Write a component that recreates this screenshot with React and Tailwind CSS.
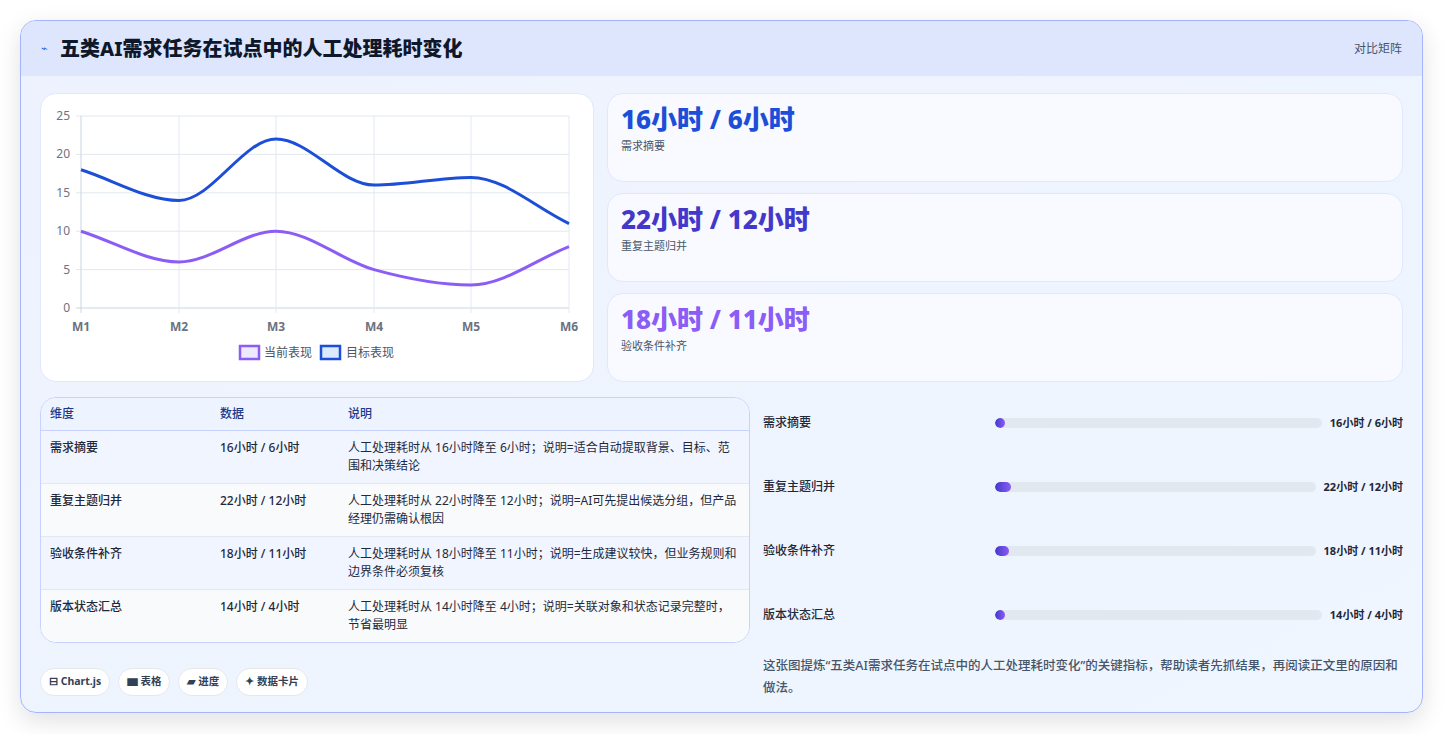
import React from "react";

const X = [80, 178, 275, 373, 470, 568];
const Y0 = 307, U = 7.68;
const blue = [18, 14, 22, 16, 17, 11];
const purple = [10, 6, 10, 5, 3, 8];

function path(vals) {
  const p = vals.map((v, i) => [X[i], Y0 - v * U]);
  let d = `M${p[0][0]},${p[0][1]}`;
  for (let i = 0; i < p.length - 1; i++) {
    const p0 = p[i - 1] || p[i], p1 = p[i], p2 = p[i + 1], p3 = p[i + 2] || p2;
    let s1 = (p2[1] - p0[1]) / (p2[0] - p0[0]);
    let s2 = (p3[1] - p1[1]) / (p3[0] - p1[0]);
    if (p0 !== p1 && (p1[1] - p0[1]) * (p2[1] - p1[1]) <= 0) s1 = 0;
    if (p3 !== p2 && (p2[1] - p1[1]) * (p3[1] - p2[1]) <= 0) s2 = 0;
    if (p0 === p1) s1 = (p2[1] - p1[1]) / (p2[0] - p1[0]);
    if (p3 === p2) s2 = (p2[1] - p1[1]) / (p2[0] - p1[0]);
    const dx = (p2[0] - p1[0]) / 3;
    d += ` C${p1[0] + dx},${p1[1] + s1 * dx} ${p2[0] - dx},${p2[1] - s2 * dx} ${p2[0]},${p2[1]}`;
  }
  return d;
}

const font = { fontFamily: '"Noto Sans", "Noto Sans CJK SC", sans-serif' };

const stats = [
  ["16小时 / 6小时", "需求摘要", "text-[#1d4ed8]"],
  ["22小时 / 12小时", "重复主题归并", "text-[#4338ca]"],
  ["18小时 / 11小时", "验收条件补齐", "text-[#8b5cf6]"],
];

const rows = [
  ["需求摘要", "16小时 / 6小时", "人工处理耗时从 16小时降至 6小时；说明=适合自动提取背景、目标、范围和决策结论"],
  ["重复主题归并", "22小时 / 12小时", "人工处理耗时从 22小时降至 12小时；说明=AI可先提出候选分组，但产品经理仍需确认根因"],
  ["验收条件补齐", "18小时 / 11小时", "人工处理耗时从 18小时降至 11小时；说明=生成建议较快，但业务规则和边界条件必须复核"],
  ["版本状态汇总", "14小时 / 4小时", "人工处理耗时从 14小时降至 4小时；说明=关联对象和状态记录完整时，节省最明显"],
];

const bars = [
  ["需求摘要", "16小时 / 6小时", 10],
  ["重复主题归并", "22小时 / 12小时", 16],
  ["验收条件补齐", "18小时 / 11小时", 14],
  ["版本状态汇总", "14小时 / 4小时", 10],
];

export default function App() {
  return (
    <div className="w-[1444px] h-[734px] bg-white p-[20px] pb-0" style={font}>
      <div className="w-[1403px] h-[693px] rounded-2xl border border-[#a5b4fc] bg-gradient-to-br from-[#eef2fe] to-[#eff6ff] shadow-[0_8px_24px_rgba(0,0,0,0.12)] overflow-hidden flex flex-col">
        <div className="h-[55px] shrink-0 bg-[#dde6fd] flex items-center justify-between px-5">
          <div className="flex items-center gap-3">
            <span className="text-[#2563eb] text-[11px]">⌁</span>
            <span className="text-[20px] font-extrabold text-[#0f172a]">五类AI需求任务在试点中的人工处理耗时变化</span>
          </div>
          <span className="text-[12px] text-[#475569]">对比矩阵</span>
        </div>
        <div className="flex-1 px-[19px] pt-[17px] flex flex-col">
          <div className="flex gap-[13px] h-[289px]">
            <div className="w-[554px] rounded-2xl bg-white border border-[#e0e7ff] relative">
              <svg width="554" height="289" viewBox="40 93 554 289" className="absolute inset-0">
                {[0, 5, 10, 15, 20, 25].map((v) => (
                  <g key={v}>
                    <line x1="75" x2="568" y1={Y0 - v * U} y2={Y0 - v * U} stroke={v === 0 ? "#cbd5e1" : "#e2e8f0"} />
                    <text x="69" y={Y0 - v * U + 4} textAnchor="end" fontSize="12" fill="#6b7280">{v}</text>
                  </g>
                ))}
                {X.map((x, i) => (
                  <g key={x}>
                    <line x1={x} x2={x} y1="115" y2="312" stroke={i === 0 ? "#cbd5e1" : "#e2e8f0"} />
                    <text x={x} y="330" textAnchor="middle" fontSize="12" fontWeight="bold" fill="#6b7280">M{i + 1}</text>
                  </g>
                ))}
                <path d={path(purple)} fill="none" stroke="#8b5cf6" strokeWidth="3" />
                <path d={path(blue)} fill="none" stroke="#1d4ed8" strokeWidth="3" />
                <rect x="239" y="345" width="19" height="13" fill="#ede9fe" stroke="#8b5cf6" strokeWidth="2.5" />
                <text x="263" y="356" fontSize="12" fill="#4b5563">当前表现</text>
                <rect x="320" y="345" width="19" height="13" fill="#dbeafe" stroke="#1d4ed8" strokeWidth="2.5" />
                <text x="345" y="356" fontSize="12" fill="#4b5563">目标表现</text>
              </svg>
            </div>
            <div className="flex-1 flex flex-col gap-[11px]">
              {stats.map(([v, l, c]) => (
                <div key={l} className="h-[89px] rounded-2xl bg-[#f8faff] border border-[#e0e7ff] px-[13px] pt-[7px]">
                  <div className={`text-[26px] font-extrabold leading-[36px] ${c}`}>{v}</div>
                  <div className="text-[11px] text-[#475569] mt-[1px]">{l}</div>
                </div>
              ))}
            </div>
          </div>
          <div className="flex gap-[13px] mt-[15px]">
            <div className="w-[710px] shrink-0 flex flex-col">
              <div className="rounded-2xl border border-[#c7d2fe] overflow-hidden bg-white">
                <div className="flex h-[33px] items-center bg-[#eef4ff] border-b border-[#c7d2fe] text-[12px] font-medium text-[#1e3a8a]">
                  <div className="w-[179px] pl-[9px]">维度</div>
                  <div className="w-[128px]">数据</div>
                  <div className="flex-1">说明</div>
                </div>
                {rows.map((r, i) => (
                  <div key={r[0]} className={`flex py-[8px] text-[12px] text-[#1e293b] leading-[18px] ${i % 2 ? "bg-[#f8fafc]" : "bg-[#f1f5ff]"} ${i < 3 ? "border-b border-[#e2e8f0]" : ""}`}>
                    <div className="w-[179px] pl-[9px] font-medium">{r[0]}</div>
                    <div className="w-[128px] font-medium">{r[1]}</div>
                    <div className="flex-1 pr-[8px]">{r[2]}</div>
                  </div>
                ))}
              </div>
              <div className="flex gap-[8px] mt-[25px]">
                {["⊟ Chart.js", "▆ 表格", "▰ 进度", "✦ 数据卡片"].map((c) => (
                  <span key={c} className="h-[28px] px-[8px] flex items-center rounded-full bg-white border border-[#e5e7eb] text-[10.5px] font-bold text-[#334155]">{c}</span>
                ))}
              </div>
            </div>
            <div className="flex-1 flex flex-col -mt-[6px]">
              {bars.map(([l, v, w]) => (
                <div key={l} className="h-[64px] flex items-center text-[12px] font-medium text-[#1e293b]">
                  <div className="w-[232px]">{l}</div>
                  <div className="flex-1 h-[10px] rounded-full bg-[#e2e8f0] overflow-hidden mr-[8px]">
                    <div className="h-full rounded-full bg-gradient-to-r from-[#4338ca] to-[#8b5cf6]" style={{ width: w }} />
                  </div>
                  <div className="font-bold text-[11px]">{v}</div>
                </div>
              ))}
              <div className="mt-[8px] text-[12.5px] leading-[22px] text-[#475569] font-medium">
                这张图提炼“五类AI需求任务在试点中的人工处理耗时变化”的关键指标，帮助读者先抓结果，再阅读正文里的原因和做法。
              </div>
            </div>
          </div>
        </div>
      </div>
    </div>
  );
}
